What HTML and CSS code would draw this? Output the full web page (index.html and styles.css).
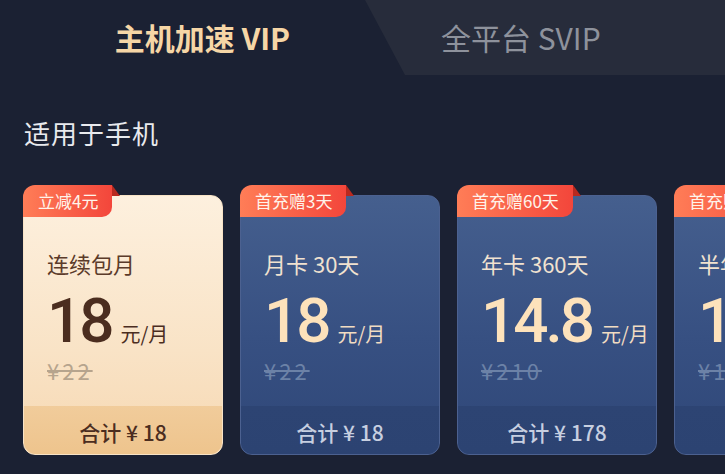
FILE: index.html
```html
<!DOCTYPE html>
<html lang="zh-CN">
<head>
<meta charset="utf-8">
<title>VIP</title>
<link rel="stylesheet" href="styles.css">
</head>
<body>
<div class="page">
  <div class="tabs">
    <div class="tab tab-active">主机加速 VIP</div>
    <div class="tab tab-other">全平台 SVIP</div>
  </div>
  <div class="section-title">适用于手机</div>
  <div class="cards">
    <div class="card card-gold">
      <div class="badge">立减4元</div>
      <div class="card-body">
        <div class="plan">连续包月</div>
        <div class="price"><span class="num">18</span><span class="unit">元/月</span></div>
        <div class="orig">¥22</div>
      </div>
      <div class="total">合计 ¥ 18</div>
    </div>
    <div class="card card-blue">
      <div class="badge">首充赠3天</div>
      <div class="card-body">
        <div class="plan">月卡 30天</div>
        <div class="price"><span class="num">18</span><span class="unit">元/月</span></div>
        <div class="orig">¥22</div>
      </div>
      <div class="total">合计 ¥ 18</div>
    </div>
    <div class="card card-blue">
      <div class="badge">首充赠60天</div>
      <div class="card-body">
        <div class="plan">年卡 360天</div>
        <div class="price"><span class="num">14.8</span><span class="unit">元/月</span></div>
        <div class="orig">¥210</div>
      </div>
      <div class="total">合计 ¥ 178</div>
    </div>
    <div class="card card-blue">
      <div class="badge">首充赠30天</div>
      <div class="card-body">
        <div class="plan">半年卡 180天</div>
        <div class="price"><span class="num">16.3</span><span class="unit">元/月</span></div>
        <div class="orig">¥118</div>
      </div>
      <div class="total">合计 ¥ 98</div>
    </div>
  </div>
</div>
</body>
</html>
```

FILE: styles.css
```css
* { box-sizing: border-box; }
html, body {
  margin: 0;
  padding: 0;
  background: #1b2133;
}
body {
  width: 725px;
  height: 474px;
  overflow: hidden;
  font-family: "Noto Sans CJK SC", "Noto Sans", sans-serif;
}
.page {
  width: 725px;
  height: 474px;
  overflow: hidden;
}
.tabs {
  display: flex;
  height: 75px;
}
.tab {
  height: 75px;
  line-height: 75px;
  font-size: 30px;
  white-space: nowrap;
}
.tab-active {
  flex: 0 0 365px;
  padding-left: 40px;
  text-align: center;
  color: #f6d6a6;
  font-weight: 700;
}
.tab-other {
  flex: 1;
  padding-left: 76px;
  background: #272c3b;
  color: #8e929c;
  clip-path: polygon(0 0, 100% 0, 100% 100%, 40px 100%);
}
.section-title {
  margin: 41px 0 0 24px;
  font-size: 26px;
  line-height: 34px;
  letter-spacing: 1px;
  color: #e9eaee;
}
.cards {
  display: flex;
  gap: 17px;
  padding-left: 23px;
  margin-top: 45px;
}
.card {
  position: relative;
  flex: 0 0 200px;
  min-width: 0;
  height: 260px;
  border-radius: 12px;
  display: flex;
  flex-direction: column;
}
.badge {
  position: absolute;
  left: -1px;
  top: -11px;
  height: 32px;
  padding: 0 14px 0 15px;
  line-height: 31px;
  font-size: 17px;
  color: #fff3ea;
  background: linear-gradient(90deg, #ff7d57, #f3463b);
  border-radius: 12px 0 10px 0;
  white-space: nowrap;
  z-index: 2;
}
.badge::after {
  content: "";
  position: absolute;
  left: 100%;
  top: 0;
  width: 0;
  height: 0;
  border-bottom: 11px solid #b9291f;
  border-right: 8px solid transparent;
}
.card-body {
  padding: 52px 0 0 23px;
  flex: 1;
  min-width: 0;
}
.plan {
  font-size: 22px;
  line-height: 30px;
  white-space: nowrap;
}
.price {
  margin-top: 12px;
  display: flex;
  align-items: baseline;
  white-space: nowrap;
}
.num {
  font-family: "Roboto", "Noto Sans", sans-serif;
  font-weight: 500;
  font-size: 62px;
  line-height: 62px;
  letter-spacing: -3px;
}
.unit {
  font-size: 20px;
  margin-left: 9px;
}
.orig {
  margin-top: 5px;
  font-family: "Noto Sans CJK SC", sans-serif;
  font-size: 22px;
  line-height: 26px;
  letter-spacing: 3px;
  text-decoration: line-through;
  text-decoration-thickness: 2px;
  white-space: nowrap;
}
.total {
  height: 48px;
  padding-top: 3px;
  line-height: 46px;
  text-align: center;
  font-size: 21px;
  font-weight: 500;
  border-radius: 0 0 12px 12px;
  white-space: nowrap;
}

/* gold card */
.card-gold {
  background: linear-gradient(180deg, #fdf0de 0%, #f9e3c6 60%, #f6d8b2 100%);
  border: 1px solid #f8e3c6;
}
.card-gold .plan { color: #5b3b2a; }
.card-gold .price { color: #4b2d1f; }
.card-gold .orig { color: #b6a48d; }
.card-gold .total {
  color: #4b2d1f;
  background: linear-gradient(180deg, #f1cc9b, #eec48d);
}

/* blue card */
.card-blue {
  background: linear-gradient(180deg, #455f8e 0%, #375082 55%, #2f4778 100%);
  border: 1px solid #4c6190;
}
.card-blue .plan { color: #f1e2d0; }
.card-blue .price { color: #fde2bb; }
.card-blue .unit { color: #f1dcc2; }
.card-blue .orig { color: #6c82a7; }
.card-blue .total {
  color: #c7cfe0;
  background: linear-gradient(180deg, #2d4473, #2c4372);
}
```
